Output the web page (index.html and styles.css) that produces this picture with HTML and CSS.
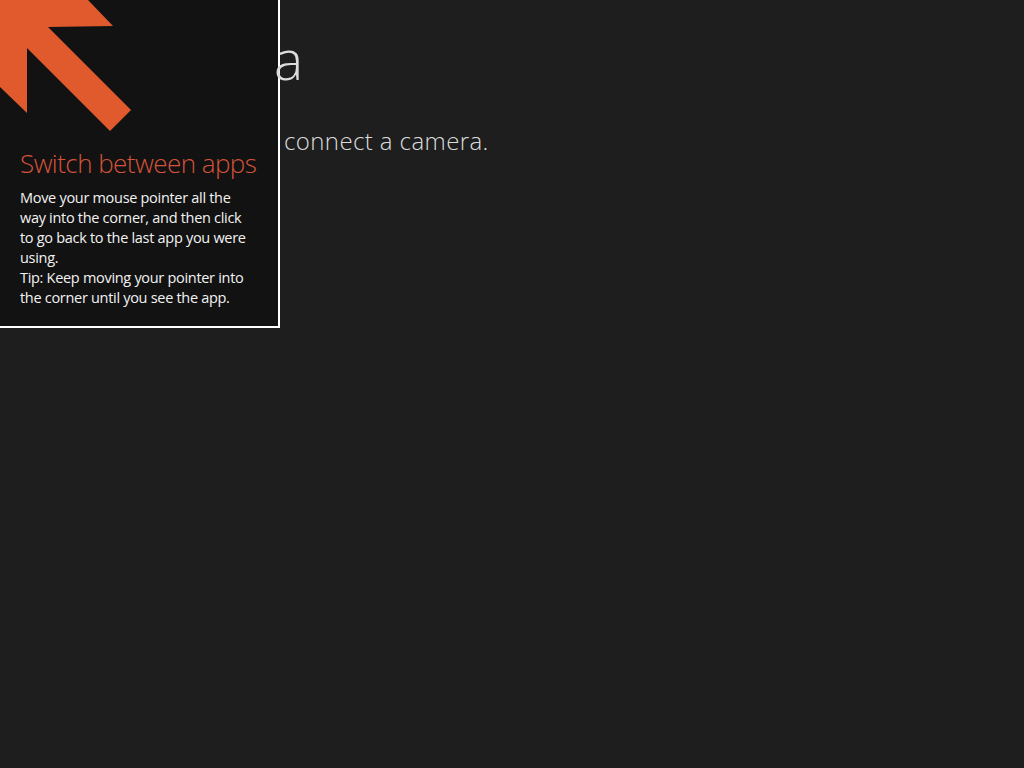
FILE: index.html
```html
<!DOCTYPE html>
<html>
<head>
<meta charset="utf-8">
<link rel="stylesheet" href="styles.css">
</head>
<body>
<div class="screen">
  <aside class="tip-panel">
    <svg class="tip-arrow" width="132" height="132" viewBox="0 0 132 132">
      <polygon points="0,0 88,0 113,26 48,27 131,110 110,131 27,48 27,113 0,87" fill="#e05a2e"/>
    </svg>
    <h2 class="tip-title">Switch between apps</h2>
    <p class="tip-text">Move your mouse pointer all the way into the corner, and then click to go back to the last app you were using.<br>Tip: Keep moving your pointer into the corner until you see the app.</p>
  </aside>
  <main class="page">
    <h1 class="page-title">a</h1>
    <p class="page-message">connect a camera.</p>
  </main>
</div>
</body>
</html>
```
FILE: styles.css
```css
html, body {
  margin: 0;
  padding: 0;
}
body {
  background: #1e1e1e;
  width: 1024px;
  height: 768px;
  overflow: hidden;
  font-family: "Open Sans", "Noto Sans", sans-serif;
  color: #e6e6e6;
}
.screen {
  display: flex;
  align-items: flex-start;
}
.tip-panel {
  flex: 0 0 278px;
  width: 278px;
  height: 326px;
  background: #121212;
  border-right: 2px solid #ffffff;
  border-bottom: 2px solid #ffffff;
}
.tip-arrow {
  display: block;
}
.tip-title {
  margin: 13px 0 0 20px;
  font-size: 26px;
  font-weight: 300;
  line-height: 36px;
  letter-spacing: -0.55px;
  color: #d5533b;
  white-space: nowrap;
}
.tip-text {
  width: 234px;
  margin: 7px 0 0 20px;
  font-size: 14.5px;
  line-height: 20px;
  letter-spacing: -0.3px;
  color: #f2f2f2;
}
.page {
  padding-top: 19px;
}
.page-title {
  margin: 0 0 0 -6px;
  font-size: 55px;
  font-weight: 300;
  line-height: 80px;
  color: #dcdcdc;
}
.page-message {
  margin: 26px 0 0 4px;
  font-size: 24px;
  font-weight: 300;
  line-height: 32px;
  letter-spacing: 0.4px;
  color: #dcdcdc;
}
```
